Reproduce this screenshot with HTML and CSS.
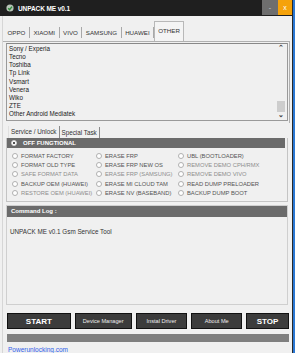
FILE: index.html
```html
<!DOCTYPE html>
<html lang="en">
<head>
    <meta charset="UTF-8">
    <meta name="viewport" content="width=device-width, initial-scale=1.0">
    <title>UNPACK ME v0.1</title>
    <link rel="stylesheet" href="styles.css">
</head>
<body>
    <div class="window">
        <div class="titlebar">
            <svg class="app-icon" width="8" height="8" viewBox="0 0 8 8">
                <circle cx="4" cy="4" r="3.6" fill="#b8c4b8"/>
                <path d="M2.2 4.2 L3.6 5.6 L6 2.6" stroke="#2e8b3a" stroke-width="1.4" fill="none"/>
            </svg>
            <span class="title">UNPACK ME v0.1</span>
            <span class="btn-min">-</span>
            <span class="btn-close">x</span>
        </div>

        <div class="client">
            <div class="tabs">
                <span class="tab">OPPO</span>
                <span class="tab">XIAOMI</span>
                <span class="tab">VIVO</span>
                <span class="tab">SAMSUNG</span>
                <span class="tab">HUAWEI</span>
                <span class="tab active">OTHER</span>
            </div>

            <div class="tab-page">
                <div class="listbox">
                    <ul class="items">
                        <li>Sony / Experia</li>
                        <li>Tecno</li>
                        <li>Toshiba</li>
                        <li>Tp Link</li>
                        <li>Vsmart</li>
                        <li>Venera</li>
                        <li>Wiko</li>
                        <li>ZTE</li>
                        <li>Other Android Mediatek</li>
                    </ul>
                    <div class="scrollbar">
                        <span class="arrow">&#8963;</span>
                        <span class="thumb"></span>
                        <span class="arrow down">&#8964;</span>
                    </div>
                </div>
            </div>

            <div class="subtabs">
                <span class="subtab active">Service / Unlock</span>
                <span class="subtab">Special Task</span>
            </div>

            <div class="panel">
                <div class="panel-head">
                    <span class="radio on"></span>
                    OFF FUNGTIONAL
                </div>
                <div class="options">
                    <label class="opt"><span class="radio"></span>FORMAT FACTORY</label>
                    <label class="opt"><span class="radio"></span>ERASE FRP</label>
                    <label class="opt"><span class="radio"></span>UBL (BOOTLOADER)</label>

                    <label class="opt"><span class="radio"></span>FORMAT OLD TYPE</label>
                    <label class="opt"><span class="radio"></span>ERASE FRP NEW OS</label>
                    <label class="opt dim"><span class="radio"></span>REMOVE DEMO CPH/RMX</label>

                    <label class="opt dim"><span class="radio"></span>SAFE FORMAT DATA</label>
                    <label class="opt dim"><span class="radio"></span>ERASE FRP (SAMSUNG)</label>
                    <label class="opt dim"><span class="radio"></span>REMOVE DEMO VIVO</label>

                    <label class="opt"><span class="radio"></span>BACKUP OEM (HUAWEI)</label>
                    <label class="opt"><span class="radio"></span>ERASE MI CLOUD TAM</label>
                    <label class="opt"><span class="radio"></span>READ DUMP PRELOADER</label>

                    <label class="opt dim"><span class="radio"></span>RESTORE OEM (HUAWEI)</label>
                    <label class="opt"><span class="radio"></span>ERASE NV (BASEBAND)</label>
                    <label class="opt"><span class="radio"></span>BACKUP DUMP BOOT</label>
                </div>
            </div>

            <div class="log">
                <div class="log-head">Command Log :</div>
                <div class="log-body">UNPACK ME v0.1 Gsm Service Tool</div>
            </div>

            <div class="actions">
                <span class="btn big start">START</span>
                <span class="btn dm">Device Manager</span>
                <span class="btn drv">Instal Driver</span>
                <span class="btn about">About Me</span>
                <span class="btn big stop">STOP</span>
            </div>

            <div class="progress"></div>

            <a class="link" href="#">Powerunlocking.com</a>
        </div>
    </div>
</body>
</html>
```

FILE: styles.css
```css
body { margin: 0; padding: 0; background: #2b78d4; font-family: "Liberation Sans", Arial, sans-serif; }
.window { width: 292px; height: 353px; background: #f0f0f0; border-right: 1px solid #2a2a2a; overflow: hidden; }

.titlebar { height: 16px; background: #1f1f1f; display: flex; align-items: center; color: #fff; }
.app-icon { margin-left: 6px; }
.title { margin-left: 4px; font-size: 6.5px; font-weight: bold; flex: 1; letter-spacing: -0.1px; }
.btn-min { width: 16px; height: 15px; background: #6e6e6e; color: #ccc; font-size: 7px; display: flex; align-items: center; justify-content: center; align-self: flex-start; }
.btn-close { width: 14px; height: 15px; background: #f5a20a; color: #fff; font-size: 7px; display: flex; align-items: center; justify-content: center; align-self: flex-start; }

.client { margin-left: 2px; border-left: 1px solid #d6d6d6; height: 337px; display: flex; flex-direction: column; }

.tabs { display: flex; align-items: flex-end; height: 25px; padding-left: 1px; font-size: 6.2px; color: #333; }
.tab { height: 11px; line-height: 11px; padding: 0 3.5px; border-right: 1px solid #a8a8a8; margin-bottom: 3px; }
.tab.active { height: 19px; line-height: 17px; border: 1px solid #b8b8b8; border-bottom: none; margin-bottom: 0; background: #f4f4f4; padding: 0 3px; }

.tab-page { margin: 0 2px 0 0; border-top: 1px solid #b0b0b0; border-right: 1px solid #b0b0b0; padding: 1px 0 2px 3px; height: 78px; }
.listbox { height: 76px; border: 1px solid #9a9a9a; border-top-color: #888; background: #f0f0f0; display: flex; margin-right: 1px; }
.items { list-style: none; margin: 0; padding: 1px 0 0 2px; flex: 1; font-size: 6.3px; line-height: 8.15px; color: #1a1a1a; }
.scrollbar { width: 9px; margin-right: 2px; display: flex; flex-direction: column; align-items: center; }
.arrow { font-size: 7px; line-height: 8px; height: 8px; color: #444; font-weight: bold; }
.thumb { width: 8px; height: 11px; background: #cdcdcd; margin-top: auto; }
.arrow.down { line-height: 5px; }

.subtabs { display: flex; height: 15px; align-items: flex-end; padding-left: 5px; font-size: 6.3px; color: #333; }
.subtab { height: 11px; line-height: 11px; padding: 0 2px; border-right: 1px solid #8a8a8a; }
.subtab.active { height: 12px; line-height: 12px; border-left: 1px solid #e0e0e0; }

.panel { margin: 0 4px 0 3px; border: 1px solid #c4c4c4; border-top: none; height: 63px; }
.panel-head { height: 10px; background: #6b6b6b; color: #fff; font-size: 6px; font-weight: bold; display: flex; align-items: center; padding-left: 4px; gap: 3px; margin: 0 2px 0 0; }
.options { display: grid; grid-template-columns: 84px 82px 1fr; padding: 4px 0 0 5px; row-gap: 1.2px; }
.opt { display: flex; align-items: center; font-size: 5.8px; color: #555; height: 8px; white-space: nowrap; }
.opt.dim { color: #8e8e8e; }
.radio { width: 4px; height: 4px; border-radius: 50%; border: 1px solid #b0b0b0; background: #fff; margin-right: 3px; flex: none; }
.radio.on { border-color: #ddd; background: radial-gradient(circle, #555 35%, #fff 45%); }

.log { margin: 3px 4px 0 3px; border: 1px solid #cfcfcf; height: 98px; display: flex; flex-direction: column; }
.log-head { height: 11px; background: #6b6b6b; color: #fff; font-size: 6px; font-weight: bold; line-height: 11px; padding-left: 4px; }
.log-body { flex: 1; font-size: 6.3px; color: #333; padding: 11px 0 0 3px; }

.actions { display: flex; gap: 4px; margin: 8px 3px 0 4px; height: 16px; }
.btn { background: #3c3c3c; border: 1px solid #111; color: #eee; font-size: 5.6px; display: flex; align-items: center; justify-content: center; box-sizing: border-box; height: 16px; }
.btn.big { font-size: 8px; font-weight: bold; color: #fff; }
.start { width: 64px; }
.dm { width: 57px; }
.drv { width: 52px; }
.about { width: 51px; }
.stop { width: 43px; }

.progress { height: 8px; background: #7f7f7f; margin: 5px 3px 0 4px; }
.link { font-size: 6.5px; color: #3060e8; margin: 4px 0 0 5px; }
```
